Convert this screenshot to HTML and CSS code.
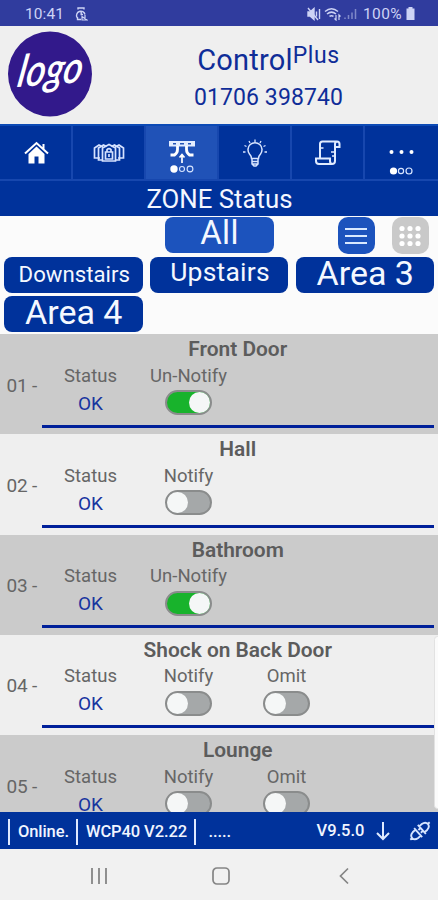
FILE: index.html
```html
<!DOCTYPE html>
<html lang="en">
<head>
<meta charset="utf-8">
<title>ControlPlus</title>
<link rel="stylesheet" href="styles.css">
</head>
<body>
<div class="phone">
  <div class="statusbar">
    <span class="clock">10:41</span>
    <svg class="alarm" width="14" height="14" viewBox="0 0 14 14" fill="none" stroke="currentColor" stroke-width="1.4"><path d="M4 2.500V1h6v1.500M3 10.500a4.300 4.300 0 1 1 8-3M3.500 10v2.500H7M7.200 5v2.500H9"/><path d="M8 9.500l5 3.500H8zM11 8v4" stroke-width="1.2"/></svg>
    <div class="indicators">
      <svg width="14" height="14" viewBox="0 0 14 14" fill="none" stroke="currentColor" stroke-width="1.4"><path d="M1 5h2l4-3.500v11L3 9H1z" fill="currentColor"/><path d="M1 1l10 12M9.500 4.500v5M12.500 2v10"/></svg>
      <svg width="17" height="14" viewBox="0 0 17 14" fill="none" stroke="currentColor" stroke-width="1.5"><path d="M1 4.500q6.500-5.500 13 0M3 7q4.500-3.800 9 0M5.500 9.400q2-1.500 4 0"/><path d="M12 8v5l-1.500-1.500M15 13V8l1.500 1.500" stroke-width="1.2"/></svg>
      <svg class="signal" width="13" height="14" viewBox="0 0 13 14" fill="none" stroke="currentColor" stroke-width="1.500"><path d="M1 10.500V12M4.500 8V12M8 5.500V12M11.500 2V12"/></svg>
      <span class="percent">100%</span>
      <svg width="9" height="13" viewBox="0 0 9 13" fill="currentColor"><path d="M2.500 0h4v1.500H8.500V13H.5V1.500h2z"/></svg>
    </div>
  </div>

  <header class="brand">
    <svg class="logo" width="84" height="86" viewBox="0 0 84 86"><ellipse cx="42" cy="43" rx="42" ry="42.500" fill="#32198b"/><g transform="translate(8 56) rotate(-4) skewX(-14)"><text class="logo-text" x="0" y="0" textLength="65" lengthAdjust="spacingAndGlyphs">logo</text></g></svg>
    <div class="brand-text">
      <div class="brand-name">Control<span class="plus">Plus</span></div>
      <div class="brand-phone">01706 398740</div>
    </div>
  </header>

  <nav class="tabs">
    <div class="tab"><svg width="25" height="24" viewBox="0 0 25 24"><path d="M4.500 13l8-7.500 8 7.500v9.500h-6v-7h-4v7h-6z" fill="#fff"/><path d="M1 12.500L12.500 2 24 12.500M19.500 3v5" fill="none" stroke="#fff" stroke-width="2"/></svg></div>
    <div class="tab"><svg width="32" height="20" viewBox="0 0 32 20" fill="none" stroke="#d5e2ff" stroke-width="1.700"><path d="M7 15H1.500V5L6 2l4 2M25 15h5.500V5L26 2l-4 2M10 17H5.500V5l5-3 3 1.500M22 17h4.500V5l-5-3-3 1.500"/><path d="M9.500 18V5L16 1.500l6.500 3.500v13z"/><path d="M12.500 9h7v7h-7zM14 9V6.500q2-2 4 0V9M16 11v3"/></svg></div>
    <div class="tab active"><svg class="sensor" width="28" height="40" viewBox="0 0 28 40"><path d="M1 2h26v5.500H1z" fill="#e3edff"/><path d="M5 4.700h3M12 4.700h4M20 4.700h3" stroke="#2455b8" stroke-width="1.500"/><path d="M9.500 7v3.500q0 3.500-3 5.500H2.500M18.500 7v3.500q0 3.500 3 5.500h4" fill="none" stroke="#fff" stroke-width="2.800"/><path d="M14 24v-8M11.500 18.500L14 15.500l2.500 3" fill="none" stroke="#fff" stroke-width="1.700"/><circle cx="6" cy="30" r="3.700" fill="#fff"/><g fill="none" stroke="#d7e5ff" stroke-width="1.100"><circle cx="14" cy="30" r="2.500"/><circle cx="22" cy="30" r="2.900"/></g></svg></div>
    <div class="tab"><svg width="26" height="28" viewBox="0 0 26 28" fill="none" stroke="#d8e5ff" stroke-width="1.500"><path d="M9.500 19.500q0-2.500-2-4.500a7 7 0 1 1 11 0q-2 2-2 4.500zM10 20v5l2 2h2l2-2v-5M10 22.500h6M10 25h6"/><path d="M1 13h2.500M22.500 13H25M2.500 6.500l2 1M23.500 6.500l-2 1M7 2l1 2M19 2l-1 2M13 .5V3" stroke-width="1.300"/></svg></div>
    <div class="tab"><svg width="26" height="26" viewBox="0 0 26 26" fill="none" stroke="#e0ebff" stroke-width="2"><path d="M5 18V4q0-2.500 2.500-2.500H22q2.500 0 2.500 2.500v3H20V4q0-2 2-2.500M20 7v14q0 3-3 3H4q-3 0-3-3v-2.500h14V21q0 3 2.500 3"/><path d="M6 8h2.500M20 12h-4M20 16h-3" stroke-width="1.500"/></svg></div>
    <div class="tab"><svg class="more" width="28" height="32" viewBox="0 0 28 32"><g fill="#fff"><circle cx="3.500" cy="5" r="2"/><circle cx="13.500" cy="5" r="2"/><circle cx="23.500" cy="5" r="2"/><circle cx="5.500" cy="24" r="3.600"/></g><g fill="none" stroke="#d7e5ff" stroke-width="1.200"><circle cx="13" cy="24" r="2.600"/><circle cx="21" cy="24" r="3"/></g></svg></div>
  </nav>

  <h1 class="page-title">ZONE Status</h1>

  <section class="filters">
    <div class="filter-top">
      <button class="area all"><span>All</span></button>
      <button class="view list"><svg width="24" height="18" viewBox="0 0 24 18" stroke="#d9e9ff" stroke-width="2"><path d="M1 2h22M1 9h22M1 16h22"/></svg></button>
      <button class="view cells"><svg width="22" height="22" viewBox="0 0 22 22" fill="#fff"><g id="dots"><circle cx="3" cy="3.500" r="2.600"/><circle cx="11" cy="3.500" r="2.600"/><circle cx="19" cy="3.500" r="2.600"/></g><use href="#dots" y="7.500"/><use href="#dots" y="15"/></svg></button>
    </div>
    <div class="areas">
      <button class="area downstairs"><span>Downstairs</span></button>
      <button class="area upstairs"><span>Upstairs</span></button>
      <button class="area big"><span>Area 3</span></button>
      <button class="area big"><span>Area 4</span></button>
    </div>
  </section>

  <main class="zones">
    <article class="zone">
      <div class="num">01 -</div><h2>Front Door</h2>
      <div class="fields">
        <div class="field"><span>Status</span><b>OK</b></div>
        <div class="field"><span>Un-Notify</span><i class="toggle on"></i></div>
      </div>
    </article>
    <article class="zone">
      <div class="num">02 -</div><h2>Hall</h2>
      <div class="fields">
        <div class="field"><span>Status</span><b>OK</b></div>
        <div class="field"><span>Notify</span><i class="toggle"></i></div>
      </div>
    </article>
    <article class="zone">
      <div class="num">03 -</div><h2>Bathroom</h2>
      <div class="fields">
        <div class="field"><span>Status</span><b>OK</b></div>
        <div class="field"><span>Un-Notify</span><i class="toggle on"></i></div>
      </div>
    </article>
    <article class="zone">
      <div class="num">04 -</div><h2>Shock on Back Door</h2>
      <div class="fields">
        <div class="field"><span>Status</span><b>OK</b></div>
        <div class="field"><span>Notify</span><i class="toggle"></i></div>
        <div class="field"><span>Omit</span><i class="toggle"></i></div>
      </div>
    </article>
    <article class="zone">
      <div class="num">05 -</div><h2>Lounge</h2>
      <div class="fields">
        <div class="field"><span>Status</span><b>OK</b></div>
        <div class="field"><span>Notify</span><i class="toggle"></i></div>
        <div class="field"><span>Omit</span><i class="toggle"></i></div>
      </div>
    </article>
    <div class="scrollbar"></div>
  </main>

  <footer class="info">
    <span class="cell online">Online.</span>
    <span class="cell model">WCP40 V2.22</span>
    <span class="cell dots">.....</span>
    <span class="version">V9.5.0</span>
    <svg class="down" width="14" height="20" viewBox="0 0 14 20" fill="none" stroke="#dfeaff" stroke-width="2"><path d="M7 1v17M1 12l6 6 6-6"/></svg>
    <svg class="plug" width="24" height="24" viewBox="0 0 24 24" fill="none" stroke="#d5e4ff" stroke-width="1.900"><g transform="rotate(-42 12 12)"><path d="M-1 12h2.500M9.500 8H6Q1.500 8.500 1.500 12T6 16h3.500M9.500 6v12M25 12h-2.500M14.500 8H18q4.500.5 4.500 4T18 16h-3.500M14.500 6v12M11.500 10.200h3M11.500 13.800h3"/></g></svg>
  </footer>

  <div class="sysnav">
    <svg width="18" height="18" viewBox="0 0 18 18" stroke="#858585" stroke-width="1.800"><path d="M2 1v16M9 1v16M16 1v16"/></svg>
    <svg class="home" width="18" height="18" viewBox="0 0 18 18" fill="none" stroke="#858585" stroke-width="1.700"><rect x="1" y="1" width="16" height="16" rx="4"/></svg>
    <svg width="10" height="18" viewBox="0 0 10 18" fill="none" stroke="#858585" stroke-width="1.700"><path d="M9 1.500L1.500 9 9 16.500"/></svg>
  </div>
</div>
</body>
</html>
```
FILE: styles.css
```css
* { box-sizing: border-box; }
body { margin: 0; font-family: Roboto, "Liberation Sans", sans-serif; }
svg { display: block; flex: none; }
button { border: 0; padding: 0; font-family: inherit; }
.phone { width: 438px; height: 900px; display: flex; flex-direction: column; overflow: hidden; background: #efefef; }

.statusbar { height: 26px; flex: none; display: flex; align-items: center; padding: 1px 23px 0 25px; background: #303c9e; color: #cdd3f5; }
.clock { font-size: 15.500px; letter-spacing: .1px; width: 49px; }
.indicators { margin-left: auto; display: flex; align-items: center; gap: 3px; }
.signal { opacity: .5; }
.percent { font-size: 15.500px; letter-spacing: .4px; margin: 0 1px 0 3px; }

.brand { height: 98px; flex: none; display: flex; padding: 5px 0 0 7.500px; background: #efefef; }
.logo-text { font: italic 600 44px Lato, sans-serif; fill: #fff; }
.brand-text { width: 260px; margin-left: 47px; text-align: center; color: #0f2d98; }
.brand-name { font-size: 29px; line-height: 34px; margin-top: 12px; letter-spacing: .2px; white-space: nowrap; }
.plus { font-size: 23px; position: relative; top: -7px; letter-spacing: .6px; }
.brand-phone { font-size: 23px; line-height: 28px; margin-top: 4px; letter-spacing: .1px; }

.tabs { height: 57px; flex: none; display: grid; grid-template-columns: repeat(6, 1fr); background: #00329b; border-top: 2px solid #0c4ab5; border-bottom: 2px solid #1747ae; }
.tab { display: flex; align-items: center; justify-content: center; border-right: 2px solid #1747ae; padding-left: 1px; }
.tab:last-child { border-right: 0; }
.tab.active { background: #2052b7; }
.sensor { margin-top: 12px; }
.more { margin-top: 20px; }

.page-title { height: 34.500px; flex: none; margin: 0; background: #00329b; color: #f4f7ff; font-size: 25.800px; font-weight: 400; line-height: 36px; text-align: center; padding-left: 1px; }

.filters { height: 118.500px; flex: none; padding: 1.500px 4px 0; background: #fbfbfb; }
.filter-top { display: flex; height: 37px; padding-left: 161px; }
.area { height: 36px; border-radius: 8px; background: #00329b; color: #f4f8ff; display: flex; justify-content: center; align-items: center; }
.area.all { width: 109px; background: #1c53bd; font-size: 33px; letter-spacing: .3px; }
.all span { margin-top: -6px; }
.view { width: 37px; height: 37px; border-radius: 10px; display: flex; align-items: center; justify-content: center; }
.list { margin-left: 63.500px; background: #1c53bd; }
.cells { margin-left: 17px; background: #c9c9c9; }
.areas { display: grid; grid-template-columns: repeat(3, 138.500px); justify-content: space-between; row-gap: 3px; margin-top: 3px; }
.downstairs { font-size: 22.200px; padding-left: 2px; }
.downstairs span { margin-top: -3px; }
.upstairs { font-size: 26.500px; padding-left: 2px; letter-spacing: .2px; }
.upstairs span { margin-top: -8px; }
.big { font-size: 34px; padding-left: 1px; }
.big span { margin-top: -5px; }

.zones { height: 478px; flex: none; overflow: hidden; position: relative; }
.zone { height: 100.300px; display: grid; grid-template-columns: 41.500px 392.500px; grid-template-rows: 28.500px 65px; background: #efefef; color: #666; }
.zone:nth-child(odd) { background: #cbcbcb; }
.num { grid-row: 1 / 3; font-size: 19px; padding: 39.500px 0 0 6.500px; white-space: nowrap; line-height: 24px; letter-spacing: -.2px; }
.zone h2 { margin: 0; font-size: 20.900px; font-weight: 600; line-height: 31px; text-align: center; color: #5c5c5c; }
.fields { display: flex; border-bottom: 3.500px solid #00209a; height: 65px; }
.field { width: 98px; display: flex; flex-direction: column; align-items: center; }
.field span { font-size: 18.500px; line-height: 27px; white-space: nowrap; }
.field b { font-size: 19px; font-weight: 400; line-height: 27px; color: #17359f; }
.toggle { width: 47px; height: 25px; margin-top: .700px; border: 2px solid #8a8c8c; border-radius: 13px; background: #a5a8a9; display: flex; }
.toggle::before { content: ""; width: 21px; height: 21px; border-radius: 50%; background: #f5f7f7; }
.toggle.on { background: #18b32c; justify-content: flex-end; }
.scrollbar { position: absolute; right: -3px; top: 302px; width: 7px; height: 173px; border-radius: 4px; background: #fbfbfb; border: 1px solid #e2e2e2; }

.info { height: 37px; flex: none; display: flex; align-items: center; padding: 0 6px 0 8px; background: #00329b; color: #f0f5ff; font-size: 16.500px; font-weight: 500; }
.cell { height: 26px; line-height: 25px; border-left: 2.500px solid #dfe9ff; padding-left: 8px; margin-top: 3px; white-space: nowrap; letter-spacing: -.1px; }
.online { width: 68px; }
.model { width: 117.500px; }
.dots { width: 80px; padding-left: 13px; }
.version { margin-left: 43px; width: 60px; }
.down { margin-left: -1px; }
.plug { margin-left: auto; }

.sysnav { flex: 1; display: flex; align-items: center; justify-content: space-between; padding: 2px 89px 0 90px; background: #f1f1f1; }
.home { margin-left: -5px; }
```
